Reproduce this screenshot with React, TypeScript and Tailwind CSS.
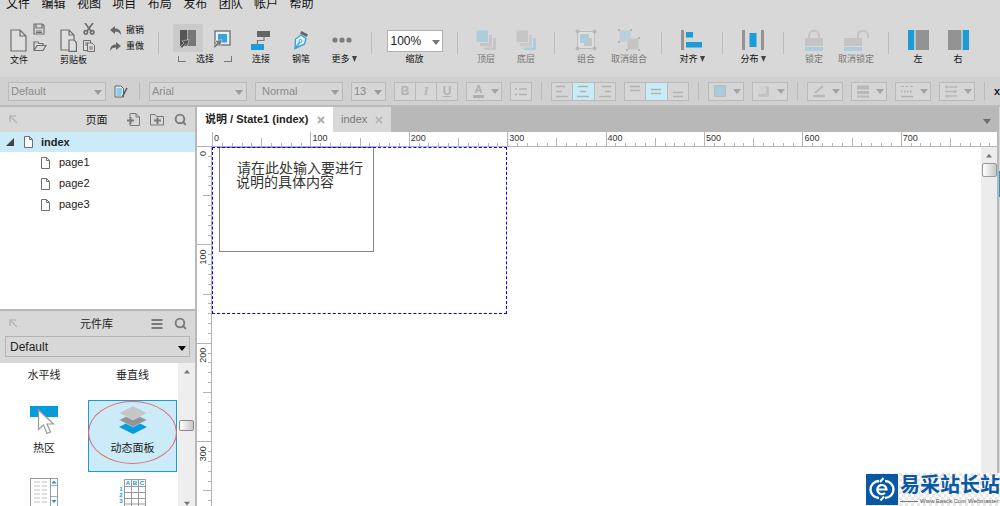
import type { ReactNode } from "react";
import { Menu, Search } from "lucide-react";

const menus = ["文件", "编辑", "视图", "项目", "布局", "发布", "团队", "帐户", "帮助"];
const pages = ["page1", "page2", "page3"];

// Ruler scale: pixels on screen per 10 units
const STEP = 9.84;

function Caret({ className = "" }: { className?: string }) {
  return (
    <svg viewBox="0 0 8 5" className={`h-[5px] w-2 ${className}`} aria-hidden="true">
      <path d="M0 0H8L4 5Z" fill="currentColor" />
    </svg>
  );
}

function PageIcon({ className = "" }: { className?: string }) {
  return (
    <svg viewBox="0 0 9 12" className={className} fill="#fff" stroke="#6f6f6f" aria-hidden="true">
      <path d="M.5 .5H5.500L8.500 3.500V11.500H.5Z M5.500 .5V3.500H8.500" />
    </svg>
  );
}

function Separator() {
  return <div className="mt-5 h-[22px] w-px flex-none bg-[#bcbcbc]" />;
}

interface ToolProps {
  label: string;
  className: string;
  children: ReactNode;
  dim?: boolean;
  more?: boolean;
}

function Tool({ label, className, children, dim, more }: ToolProps) {
  return (
    <button
      type="button"
      className={`flex flex-none flex-col items-center pt-[14px] ${dim ? "text-[#777]" : "text-[#111]"} ${className}`}
    >
      <span className="flex h-7 items-center justify-center">{children}</span>
      <span className="flex h-[10px] items-center gap-[2px] text-[9px] leading-[10px] whitespace-nowrap">
        {label}
        {more && (
          <svg viewBox="0 0 5 6" className="h-[6px] w-[5px]" aria-hidden="true">
            <path d="M0 0H5L2.500 6Z" fill="#444" />
          </svg>
        )}
      </span>
    </button>
  );
}

function Dropdown({ label, value, className }: { label: string; value: string; className: string }) {
  return (
    <div className={`relative h-[19px] flex-none border border-[#bababa] bg-[#d6d6d6] text-[#8c8c8c] ${className}`}>
      <select
        aria-label={label}
        className="block h-full w-full appearance-none bg-transparent pr-3 pl-[2px] text-[11px] leading-[17px] outline-none"
      >
        <option>{value}</option>
      </select>
      <Caret className="pointer-events-none absolute top-[7px] right-[3px] text-[#9c9c9c]" />
    </div>
  );
}

function FormatMenu({ label, children }: { label: string; children: ReactNode }) {
  return (
    <button
      type="button"
      aria-label={label}
      className="flex h-[19px] w-9 flex-none items-center justify-between border border-[#bababa] bg-[#d6d6d6] pr-[2px] pl-1"
    >
      {children}
      <Caret className="text-[#a4a4a4]" />
    </button>
  );
}

function FormatGroup({ className, children }: { className: string; children: ReactNode }) {
  return (
    <div className={`flex h-[19px] flex-none divide-x divide-[#bababa] border border-[#bababa] bg-[#d6d6d6] text-[#b4b4b4] ${className}`}>
      {children}
    </div>
  );
}

function LinesButton({ label, d, active }: { label: string; d: string; active?: boolean }) {
  return (
    <button
      type="button"
      aria-label={label}
      className={`flex flex-1 items-center justify-center ${active ? "bg-[#c9ebf8]" : ""}`}
    >
      <svg viewBox="0 0 14 13" className="h-[13px] w-[14px]" stroke="#b2b2b2" strokeWidth="1.4">
        <path d={d} />
      </svg>
    </button>
  );
}

function BarDivider() {
  return <div className="mx-px h-[18px] w-px flex-none bg-[#bababa]" />;
}

function Toolbar() {
  return (
    <div className="flex h-[65px] flex-none items-start gap-[14px] overflow-hidden pl-[10px]">
      {/* File and clipboard */}
      <div className="w-9 flex-none pt-4">
        <div className="flex gap-[6px]">
          <button type="button" aria-label="新建">
            <svg viewBox="0 0 17 23" className="h-[23px] w-[17px]" fill="#dedede" stroke="#6e6e6e" strokeWidth="1.2">
              <path d="M1 1H10L16 7V22H1Z M10 1V7H16" />
            </svg>
          </button>
          <div className="-mt-[5px] flex flex-col gap-[5px]">
            <button type="button" aria-label="保存">
              <svg viewBox="0 0 12 12" className="block h-3 w-3" fill="none" stroke="#6e6e6e" strokeWidth="1.2">
                <path d="M1 1H9.500L11 2.500V11H1Z M3 1V5H9V1 M3 8H9 M3 9.500H9" />
              </svg>
            </button>
            <button type="button" aria-label="打开">
              <svg viewBox="0 0 14 12" className="block h-3 w-[14px]" fill="none" stroke="#6e6e6e" strokeWidth="1.2">
                <path d="M1 10V2H5L6 3.500H10V5.500 M1 10.500L4 5.500H13L10 10.500Z" />
              </svg>
            </button>
          </div>
        </div>
        <div className="mt-[3px] text-[9px] leading-[10px] text-[#111]">文件</div>
      </div>
      <div className="w-9 flex-none pt-4">
        <div className="flex gap-[6px]">
          <button type="button" aria-label="粘贴">
            <svg viewBox="0 0 17 23" className="h-[23px] w-[17px]" fill="#dedede" stroke="#6e6e6e" strokeWidth="1.2">
              <path d="M1 1H9L14 6V21H1Z M9 1V6H14" />
              <path d="M9 11H14L16.400 13.500V22.400H9Z" />
            </svg>
          </button>
          <div className="-mt-[5px] flex flex-col gap-[5px]">
            <button type="button" aria-label="剪切">
              <svg viewBox="0 0 12 12" className="block h-3 w-3" fill="none" stroke="#6e6e6e" strokeWidth="1.7">
                <path d="M2 0L8 8 M10 0L4 8" />
                <circle cx="2.800" cy="9.300" r="1.700" />
                <circle cx="9.200" cy="9.300" r="1.700" />
              </svg>
            </button>
            <button type="button" aria-label="复制">
              <svg viewBox="0 0 12 12" className="block h-3 w-3" fill="#dedede" stroke="#6e6e6e">
                <path d="M.5 .5H7.500V10.500H.5Z M2 3H5 M2 5H5" />
                <path d="M4.500 3H9L11.500 5.500V11.500H4.500Z M6 7H10 M6 9H10" />
              </svg>
            </button>
          </div>
        </div>
        <div className="mt-[3px] text-[9px] leading-[10px] whitespace-nowrap text-[#111]">剪贴板</div>
      </div>
      <div className="flex w-[34px] flex-none flex-col gap-[6px] pt-[13px] text-[9px] leading-[10px] text-[#111]">
        <button type="button" className="flex items-center justify-between">
          <svg viewBox="0 0 11 9" className="h-[9px] w-[11px]" fill="#666">
            <path d="M0 4L5 0V2.500C9 2.500 11 5 11 9C9.500 6.500 8 5.500 5 5.500V8Z" />
          </svg>
          撤销
        </button>
        <button type="button" className="flex items-center justify-between">
          <svg viewBox="0 0 11 9" className="h-[9px] w-[11px]" fill="#666">
            <path d="M11 4L6 0V2.500C2 2.500 0 5 0 9C1.500 6.500 3 5.500 6 5.500V8Z" />
          </svg>
          重做
        </button>
      </div>
      <Separator />

      {/* Selection mode */}
      <div className="w-16 flex-none pt-3">
        <div className="flex gap-1">
          <button type="button" aria-label="相交选择" className="flex h-7 w-[30px] items-center justify-center bg-[#cacaca]">
            <svg viewBox="0 0 18 20" className="h-5 w-[18px]">
              <path d="M1 2H8V18H1Z" fill="#555" />
              <path d="M9 2H17V18H9Z" fill="#777" />
              <path d="M8.500 2V18" stroke="#aaa" />
              <path d="M1 19L5 15L3 13L10 11.500L8.500 18L6.500 16.500L3 20Z" fill="#555" stroke="#ccc" strokeWidth=".6" />
            </svg>
          </button>
          <button type="button" aria-label="包含选择" className="flex h-7 w-[30px] items-center justify-center">
            <svg viewBox="0 0 18 20" className="h-5 w-[18px]">
              <path d="M2 3H17V17H2Z" fill="#e6f2f8" stroke="#7c7c7c" strokeWidth="1.500" />
              <path d="M5 6H14V14.500H5Z" fill="#35a5dc" />
              <path d="M0 19L4 15L2 13L9 11.500L7.500 18L5.500 16.500L2 20Z" fill="#777" stroke="#ddd" strokeWidth=".6" />
            </svg>
          </button>
        </div>
        <div className="mt-[2px] flex items-center justify-between px-[5px] text-[9px] leading-[10px] text-[#111]">
          <span className="h-[6px] w-2 border-b border-l border-[#777]" />
          选择
          <span className="h-[6px] w-2 border-r border-b border-[#777]" />
        </div>
      </div>
      <div className="flex flex-none gap-5">
        <Tool label="连接" className="w-5">
          <svg viewBox="0 0 20 20" className="h-5 w-5">
            <path d="M6 1H19V7H6Z" fill="#666" />
            <path d="M0 14H13V20H0Z" fill="#1c9bd6" />
            <path d="M13 7V10.500H6.500V14" fill="none" stroke="#777" strokeWidth="1.200" />
          </svg>
        </Tool>
        <Tool label="钢笔" className="w-5">
          <svg viewBox="0 0 16 20" className="h-5 w-4">
            <path d="M2 18.500L2.500 9L8 5L13 8.500L11.500 14Z M2 18.500L7 12" fill="#e4f1f7" stroke="#3aa3d4" strokeWidth="1.400" />
            <circle cx="7.500" cy="11" r="1.500" fill="#fff" stroke="#3aa3d4" />
            <path d="M8.500 1L15 4.500L13.500 7L7 3.500Z" fill="#666" />
          </svg>
        </Tool>
        <Tool label="更多" className="w-[26px]" more>
          <svg viewBox="0 0 20 6" className="mr-1 h-[6px] w-5" fill="#7d7d7d">
            <circle cx="3" cy="3" r="2.600" />
            <circle cx="10" cy="3" r="2.600" />
            <circle cx="17" cy="3" r="2.600" />
          </svg>
        </Tool>
      </div>
      <Separator />

      {/* Zoom */}
      <div className="flex w-[57px] flex-none flex-col items-center pt-[18px]">
        <div className="relative h-[22px] w-[56px] border border-[#b0b0b0] bg-white">
          <select
            id="zoom"
            className="block h-full w-full appearance-none bg-white pl-[3px] text-[12px] leading-[20px] text-[#222] outline-none"
          >
            <option>100%</option>
          </select>
          <Caret className="pointer-events-none absolute top-[9px] right-[2px] text-[#777]" />
        </div>
        <label htmlFor="zoom" className="mt-[2px] text-[9px] leading-[10px] text-[#111]">
          缩放
        </label>
      </div>
      <Separator />

      {/* Stacking order */}
      <div className="flex flex-none gap-3">
        <Tool label="顶层" className="w-7" dim>
          <svg viewBox="0 0 20 20" className="h-5 w-5">
            <path d="M8 8H20V20H8Z" fill="#c6c6c6" />
            <path d="M3.500 4.500H16.500V17H3.500Z" fill="#c6c6c6" stroke="#d8d8d8" />
            <path d="M0 0H12.500V12.500H0Z" fill="#adcddb" stroke="#d8d8d8" />
          </svg>
        </Tool>
        <Tool label="底层" className="w-7" dim>
          <svg viewBox="0 0 20 20" className="h-5 w-5">
            <path d="M8 8H20V20H8Z" fill="#adcddb" />
            <path d="M3.500 4.500H16.500V17H3.500Z" fill="#cacaca" stroke="#d8d8d8" />
            <path d="M0 0H12.500V12.500H0Z" fill="#c6c6c6" stroke="#d8d8d8" />
          </svg>
        </Tool>
      </div>
      <Separator />

      <div className="flex flex-none gap-2">
        <Tool label="组合" className="w-[34px]" dim>
          <svg viewBox="0 0 22 22" className="h-[22px] w-[22px]">
            <path d="M2.500 2.500H19.500V19.500H2.500Z" fill="#dedede" stroke="#bcbcbc" />
            <path d="M9 9H17V17H9Z" fill="#c4c4c4" />
            <path d="M5 5H14V14H5Z" fill="#adcddb" />
            <g fill="#b8b8b8">
              <circle cx="2.500" cy="2.500" r="2" />
              <circle cx="19.500" cy="2.500" r="2" />
              <circle cx="2.500" cy="19.500" r="2" />
              <circle cx="19.500" cy="19.500" r="2" />
            </g>
          </svg>
        </Tool>
        <Tool label="取消组合" className="w-9" dim>
          <svg viewBox="0 0 22 22" className="h-[22px] w-[22px]">
            <path d="M9.500 9.500H20.500V20.500H9.500Z" fill="#c4c4c4" />
            <path d="M1.500 1.500H12.500V12.500H1.500Z" fill="#b9d0da" />
            <path
              d="M0 0H2V2H0Z M12 0H14V2H12Z M0 12H2V14H0Z M20 8H22V10H20Z M8 20H10V22H8Z M20 20H22V22H20Z"
              fill="#b4b4b4"
            />
          </svg>
        </Tool>
      </div>
      <Separator />

      <Tool label="对齐" className="w-8" more>
        <svg viewBox="0 0 22 22" className="h-[22px] w-[22px]">
          <path d="M0 1H3V21H0Z" fill="#939393" />
          <path d="M5 3H12V8.500H5Z M5 13H21V18.500H5Z" fill="#1c9bd6" />
        </svg>
      </Tool>
      <Separator />
      <Tool label="分布" className="w-8" more>
        <svg viewBox="0 0 22 22" className="h-[22px] w-[22px]">
          <path d="M0 1H3V21H0Z M19 1H22V21H19Z" fill="#939393" />
          <path d="M7.500 4H14.500V18H7.500Z" fill="#1c9bd6" />
        </svg>
      </Tool>
      <Separator />

      <div className="flex flex-none gap-2">
        <Tool label="锁定" className="w-8" dim>
          <svg viewBox="0 0 18 22" className="h-[22px] w-[18px]">
            <path d="M4 9V6.500C4 0 14 0 14 6.500V9" fill="none" stroke="#c4c4c4" strokeWidth="2" />
            <path d="M0 9H18V17H0Z" fill="#c4c4c4" />
            <path d="M0 18H18V22H0Z" fill="#adcddb" />
          </svg>
        </Tool>
        <Tool label="取消锁定" className="w-9" dim>
          <svg viewBox="0 0 25 22" className="h-[22px] w-[25px]">
            <path d="M14 9V6.500C14 0 24 0 24 6.500V9" fill="none" stroke="#c4c4c4" strokeWidth="2" />
            <path d="M0 9H18V17H0Z" fill="#c4c4c4" />
            <path d="M0 18H18V22H0Z" fill="#adcddb" />
          </svg>
        </Tool>
      </div>
      <Separator />

      <div className="flex flex-none gap-[10px]">
        <Tool label="左" className="w-[30px]">
          <svg viewBox="0 0 21 20" className="h-5 w-[21px]">
            <path d="M0 0H6V20H0Z" fill="#1c9bd6" />
            <path d="M6 0H8V20H6Z" fill="#b4c4cc" />
            <path d="M8 0H21V20H8Z" fill="#939393" />
          </svg>
        </Tool>
        <Tool label="右" className="w-[30px]">
          <svg viewBox="0 0 21 20" className="h-5 w-[21px]">
            <path d="M15 0H21V20H15Z" fill="#1c9bd6" />
            <path d="M13 0H15V20H13Z" fill="#b4c4cc" />
            <path d="M0 0H13V20H0Z" fill="#939393" />
          </svg>
        </Tool>
      </div>
    </div>
  );
}

function FormatBar() {
  return (
    <div className="flex h-[30px] flex-none items-center gap-2 overflow-hidden border-b-2 border-[#bcbcbc] bg-[#d0d0d0] pl-2">
      <Dropdown label="样式" value="Default" className="w-[98px]" />
      <button type="button" aria-label="样式管理" className="w-4 flex-none">
        <svg viewBox="0 0 14 13" className="h-[13px] w-[14px]">
          <path d="M1 1H7L9.500 3.500V12H1Z" fill="#d9f0fa" stroke="#666" />
          <path d="M2.500 4H8M2.500 6H8M2.500 8H8M2.500 10H7" stroke="#3fa9db" />
          <path d="M13 3L8.500 11.500" stroke="#555" strokeWidth="1.600" />
        </svg>
      </button>
      <BarDivider />
      <Dropdown label="字体" value="Arial" className="w-[98px]" />
      <Dropdown label="字形" value="Normal" className="w-[88px] pl-1" />
      <Dropdown label="字号" value="13" className="w-[35px]" />
      <FormatGroup className="w-16 text-[12px] leading-[17px]">
        <button type="button" className="flex-1 font-bold">B</button>
        <button type="button" className="flex-1 font-['Liberation_Serif',serif] font-bold italic">I</button>
        <button type="button" className="flex-1 font-bold underline">U</button>
      </FormatGroup>
      <FormatMenu label="文字颜色">
        <span className="ml-[2px] h-[14px] w-[11px] border-b-[3px] border-[#b0b0b0] text-center text-[11px] leading-[11px] font-bold text-[#b0b0b0]">
          A
        </span>
      </FormatMenu>
      <FormatGroup className="w-[22px]">
        <LinesButton label="项目符号" d="M1 4H3 M5 4H13 M1 9.500H3 M5 9.500H13" />
      </FormatGroup>
      <BarDivider />
      <FormatGroup className="w-[65px]">
        <LinesButton label="左对齐" d="M1 1.500H10 M1 6.500H7 M1 11.500H13" />
        <LinesButton label="居中" d="M2 1.500H12 M4 6.500H10 M1 11.500H13" active />
        <LinesButton label="右对齐" d="M4 1.500H13 M7 6.500H13 M1 11.500H13" />
      </FormatGroup>
      <FormatGroup className="w-[65px]">
        <LinesButton label="顶部对齐" d="M2 1.500H12 M2 5.500H12" />
        <LinesButton label="垂直居中" d="M2 4.500H12 M2 8.500H12" active />
        <LinesButton label="底部对齐" d="M2 7.500H12 M2 11.500H12" />
      </FormatGroup>
      <BarDivider />
      <FormatMenu label="填充颜色">
        <span className="ml-px h-3 w-3 border border-[#bbb] bg-[#a9cbda]" />
      </FormatMenu>
      <FormatMenu label="阴影">
        <span className="ml-px h-[11px] w-[11px] rounded-[2px] border-r-[3px] border-b-[3px] border-[#c2c2c2] bg-[#d2d2d2]" />
      </FormatMenu>
      <BarDivider />
      <FormatMenu label="线条颜色">
        <svg viewBox="0 0 14 13" className="h-[13px] w-[14px]" stroke="#b8b8b8">
          <path d="M3 8L11 1" strokeWidth="2" />
          <path d="M1 11H13" strokeWidth="2.500" />
        </svg>
      </FormatMenu>
      <FormatMenu label="线宽">
        <svg viewBox="0 0 14 13" className="h-[13px] w-[14px]" stroke="#b8b8b8">
          <path d="M1 2.500H13" strokeWidth="4" />
          <path d="M1 7.500H13" strokeWidth="3" />
          <path d="M1 11.500H13" strokeWidth="2" />
        </svg>
      </FormatMenu>
      <FormatMenu label="线型">
        <svg viewBox="0 0 14 13" className="h-[13px] w-[14px]" stroke="#b0b0b0">
          <path d="M1 1.500H13" strokeDasharray="3 1.500" />
          <path d="M1 6.500H13" strokeWidth="2" strokeDasharray="1.500 1.500" />
          <path d="M1 11.500H13" strokeWidth="1.500" />
        </svg>
      </FormatMenu>
      <FormatMenu label="箭头">
        <svg viewBox="0 0 14 13" className="h-[13px] w-[14px]" stroke="#b8b8b8" strokeWidth="1.300">
          <path d="M1 2H13 M1 6.500H13 M1 11H13 M3 .5V3.500 M11 5V8 M3 9.500V12.500" />
        </svg>
      </FormatMenu>
      <BarDivider />
      <span className="flex-none text-[11px] font-bold text-[#222]">x:</span>
    </div>
  );
}

function PanelHeader({ title, children }: { title: string; children: ReactNode }) {
  return (
    <div className="flex h-[25px] flex-none items-center bg-[#d8d8d8] pr-2 pl-[9px]">
      <svg viewBox="0 0 9 9" className="h-[9px] w-[9px]" fill="none" stroke="#b8b8b8" strokeWidth="1.600">
        <path d="M1 7V1H7 M1 1L8 8" />
      </svg>
      <h2 className="flex-1 pl-12 text-center text-[11px] leading-4 text-[#222]">{title}</h2>
      {children}
    </div>
  );
}

function PagesPanel() {
  return (
    <section className="h-[204px] flex-none border-b-2 border-[#b8b8b8] bg-white">
      <PanelHeader title="页面">
        <div className="flex w-[60px] items-center justify-between text-[#7a7a7a]">
          <button type="button" aria-label="添加页面">
            <svg viewBox="0 0 13 13" className="block h-[13px] w-[13px]" fill="none" stroke="currentColor">
              <path d="M3 4V.5H9L12.500 4V12.500H3V10 M9 .5V4H12.500" />
              <path d="M0 7.500H7 M3.500 4V11" strokeWidth="2" />
            </svg>
          </button>
          <button type="button" aria-label="添加文件夹">
            <svg viewBox="0 0 14 13" className="block h-[13px] w-[14px]" fill="none" stroke="currentColor">
              <path d="M.5 1.500H5L6.500 3.500H13.500V12H.5Z" />
              <path d="M4 7.500H11 M7.500 4.500V11" strokeWidth="2" />
            </svg>
          </button>
          <button type="button" aria-label="搜索页面">
            <Search size={13} strokeWidth={3.5} className="block" />
          </button>
        </div>
      </PanelHeader>
      <div className="flex h-5 items-center bg-[#cbebf8] pl-[6px]">
        <svg viewBox="0 0 8 8" className="h-2 w-2">
          <path d="M8 0V8H0Z" fill="#444" />
        </svg>
        <PageIcon className="ml-[10px] h-3 w-[9px]" />
        <span className="ml-2 text-[11px] font-bold text-[#222]">index</span>
      </div>
      <ul>
        {pages.map((page) => (
          <li key={page} className="flex h-[21px] items-center gap-[9px] pl-[41px] text-[11px] text-[#222]">
            <PageIcon className="h-3 w-[9px]" />
            {page}
          </li>
        ))}
      </ul>
    </section>
  );
}

function LibraryPanel() {
  return (
    <section className="flex min-h-0 flex-1 flex-col bg-[#d8d8d8]">
      <PanelHeader title="元件库">
        <div className="flex w-[60px] items-center justify-between pl-[23px] text-[#7a7a7a]">
          <button type="button" aria-label="元件库菜单">
            <Menu size={14} strokeWidth={3.5} className="block" />
          </button>
          <button type="button" aria-label="搜索元件">
            <Search size={13} strokeWidth={3.5} className="block" />
          </button>
        </div>
      </PanelHeader>
      <div className="relative mx-[5px] mb-[6px] h-[21px] flex-none border border-[#b4b4b4]">
        <select
          aria-label="选择元件库"
          className="block h-full w-full appearance-none bg-transparent pt-px pl-1 text-[12px] leading-[18px] text-[#222] outline-none"
        >
          <option>Default</option>
        </select>
        <Caret className="pointer-events-none absolute top-[9px] right-[3px] text-black" />
      </div>
      <div className="flex min-h-0 flex-1 overflow-hidden bg-white">
        <div className="grid flex-1 grid-cols-[88px_89px] grid-rows-[37px_72px_auto] text-center text-[11px] leading-4 text-[#222]">
          <div className="pt-1">水平线</div>
          <div className="pt-1">垂直线</div>
          <button type="button" className="flex flex-col items-center pt-[6px]">
            <svg viewBox="0 0 28 30" className="h-[30px] w-7">
              <path d="M0 0H28V11H0Z" fill="#069cdb" />
              <path d="M8.500 4V23.500L13.500 19L17 27.500L20.500 26L17 18H23.500Z" fill="#fff" stroke="#999" strokeWidth="1.200" />
            </svg>
            <span className="mt-1">热区</span>
          </button>
          <button type="button" className="relative flex flex-col items-center border border-[#1c9bd0] bg-[#cbebf8] pt-[5px]">
            <svg viewBox="0 0 28 30" className="h-[30px] w-7">
              <path d="M14 14L28 21L14 28L0 21Z" fill="#069cdb" />
              <path d="M14 7L28 14L14 21L0 14Z" fill="#949494" stroke="#cbebf8" strokeWidth=".5" />
              <path d="M14 0L28 7L14 14L0 7Z" fill="#c6c6c6" stroke="#cbebf8" strokeWidth=".5" />
            </svg>
            <span className="mt-1">动态面板</span>
            {/* Hand-drawn mark around the widget */}
            <span className="absolute -inset-x-px top-0 h-[63px] rounded-[50%] border border-[#e06a6e]" />
          </button>
          <button type="button" aria-label="内联框架" className="flex justify-center pt-[6px]">
            <svg viewBox="0 0 28 30" className="h-[30px] w-7">
              <path d="M.5 .5H27.500V30H.5Z M20.500 .5V30" fill="#fff" stroke="#999" />
              <path d="M4 4H10M12 4H17M4 8H10M12 8H17M4 12H10M12 12H17M4 16H10M12 16H17M4 20H10M12 20H17M4 24H10M12 24H17" stroke="#c0c0c0" />
              <path d="M21 7.500H27M21 18.500H27" stroke="#aaa" />
              <path d="M24 2.500L26.500 5.500H21.500Z M24 25L26.500 22H21.500Z" fill="#069cdb" />
            </svg>
          </button>
          <button type="button" aria-label="中继器" className="flex justify-center pt-[6px]">
            <svg viewBox="0 0 28 30" className="h-[30px] w-7">
              <path d="M5.500 1.500H26.500V28 M5.500 1.500V28 M12.500 1.500V28 M19.500 1.500V28 M5.500 8.500H26.500 M5.500 14.500H26.500 M5.500 20.500H26.500 M5.500 26H26.500" fill="none" stroke="#999" />
              <g fill="#069cdb" fontSize="6" fontWeight="bold" textAnchor="middle">
                <text x="9" y="7">A</text>
                <text x="16" y="7">B</text>
                <text x="23" y="7">C</text>
                <text x="2" y="13">1</text>
                <text x="2" y="19">2</text>
                <text x="2" y="25">3</text>
              </g>
            </svg>
          </button>
        </div>
        <div className="flex w-[17px] flex-none flex-col items-center bg-[#eee] pt-[6px]">
          <Caret className="w-[6px] rotate-180 text-[#777]" />
          <div className="mt-[46px] h-[11px] w-[15px] rounded-[2px] border border-[#888] bg-gradient-to-r from-white to-[#c8c8c8]" />
          <Caret className="mt-auto w-[6px] text-[#777]" />
        </div>
      </div>
    </section>
  );
}

const ticks = Array.from({ length: 80 }, (_, i) => i);

function tickStart(i: number) {
  if (i % 10 === 0) return 0;
  return i % 5 === 0 ? 6 : 11;
}

function HorizontalRuler() {
  return (
    <svg className="block h-[15px] min-w-0 flex-1 bg-white" stroke="#b4b4b4">
      <path d="M0 14.500H2000" />
      {ticks.map((i) => (
        <path key={i} d={`M${Math.round(i * STEP) + 0.5} ${tickStart(i)}V15`} />
      ))}
      <g fill="#333" stroke="none" fontSize="9">
        {ticks.filter((i) => i % 10 === 0).map((i) => (
          <text key={i} x={i * STEP + 2} y="9">{i * 10}</text>
        ))}
      </g>
    </svg>
  );
}

function VerticalRuler() {
  return (
    <svg className="block h-full w-[15px] flex-none bg-white" stroke="#b4b4b4">
      <path d="M14.500 0V2000" />
      {ticks.map((i) => (
        <path key={i} d={`M${tickStart(i)} ${Math.round(i * STEP) - 0.5}H15`} />
      ))}
      <g fill="#333" stroke="none" fontSize="9" textAnchor="end">
        {ticks.filter((i) => i % 10 === 0).map((i) => (
          <text key={i} transform={`translate(9 ${i * STEP + 4}) rotate(-90)`}>{i * 10}</text>
        ))}
      </g>
    </svg>
  );
}

function Editor() {
  return (
    <main className="flex min-w-0 flex-1 flex-col">
      <div className="flex h-[25px] flex-none items-stretch bg-[#b8b8b8] text-[11px]">
        <div className="flex w-[136px] items-center justify-between bg-white pr-2 pl-2 font-bold whitespace-nowrap text-[#222]">
          说明 / State1 (index)
          <button type="button" aria-label="关闭" className="text-[#b0b0b0]">
            <svg viewBox="0 0 8 8" className="h-2 w-2" stroke="currentColor" strokeWidth="2">
              <path d="M1 1L7 7M7 1L1 7" />
            </svg>
          </button>
        </div>
        <div className="flex w-[58px] items-center justify-between bg-[#d8d8d8] pr-2 pl-2 text-[#777]">
          index
          <button type="button" aria-label="关闭" className="text-[#b8b8b8]">
            <svg viewBox="0 0 8 8" className="h-2 w-2" stroke="currentColor" strokeWidth="2">
              <path d="M1 1L7 7M7 1L1 7" />
            </svg>
          </button>
        </div>
        <button type="button" aria-label="标签列表" className="ml-auto px-[6px] pt-1">
          <Caret className="text-[#6c6c6c]" />
        </button>
      </div>
      <div className="flex flex-none bg-white">
        <div className="w-[15px] flex-none border-b border-[#b4b4b4]" />
        <HorizontalRuler />
      </div>
      <div className="flex min-h-0 flex-1">
        <VerticalRuler />
        <div className="relative min-w-0 flex-1 overflow-hidden bg-white">
          {/* Widget placed on the canvas */}
          <div className="absolute top-0 left-[7px] h-[105px] w-[155px] border border-[#858585] pt-[13px] pl-4">
            <p className="pl-px text-[14px] leading-[14px] whitespace-nowrap text-[#333]">请在此处输入要进行</p>
            <p className="text-[14px] leading-[14px] whitespace-nowrap text-[#333]">说明的具体内容</p>
          </div>
          {/* Dynamic panel bounds */}
          <div className="absolute top-0 left-0 h-[167px] w-[295px] border border-dashed border-[#0000ff]" />
        </div>
        <div className="flex w-4 flex-none flex-col items-center bg-[#ececec] pt-[6px]">
          <Caret className="w-[6px] rotate-180 text-[#777]" />
          <div className="mt-[5px] h-[14px] w-[15px] rounded-[2px] border border-[#999] bg-gradient-to-r from-white to-[#c8c8c8]" />
        </div>
      </div>
    </main>
  );
}

function Watermark() {
  return (
    <div className="absolute right-0 bottom-0 flex h-[33px] w-[134px] items-start bg-white bg-[repeating-conic-gradient(#e8e8e8_0_25%,#fff_0_50%)] bg-[length:6px_6px]">
      <svg viewBox="0 0 32 32" className="h-8 w-8 flex-none">
        <path d="M0 1H32V32H0Z" fill="#0758a5" />
        <g fill="none" stroke="#fff">
          <path d="M13 8A8.500 8.500 0 0 0 13 25 M19 8A8.500 8.500 0 0 1 19 25" strokeWidth="2.400" />
          <path d="M11.500 16.500H20.500A4.600 4.600 0 1 0 19 20" strokeWidth="2.200" />
          <path d="M17.500 5L14 9 M18 23.500L14.500 27.500" strokeWidth="2" />
        </g>
      </svg>
      <div className="flex flex-col pl-[2px] whitespace-nowrap">
        <span className="text-[20px] leading-[25px] font-bold text-[#0758a5]">易采站长站</span>
        <span className="flex items-center gap-[2px] text-[6px] leading-[6px] text-[#555]">
          <span className="h-px w-[18px] bg-[#777]" />
          Www.Easck.Com Webmaster
        </span>
      </div>
    </div>
  );
}

export default function App() {
  return (
    <div className="relative flex h-screen flex-col overflow-hidden bg-[#d8d8d8] font-['Liberation_Sans','Noto_Sans_CJK_SC',sans-serif]">
      <nav className="grid h-3 w-[325px] flex-none grid-cols-9 overflow-hidden pl-[6px]">
        {menus.map((menu) => (
          <button key={menu} type="button" className="-mt-1 h-4 text-left text-[12px] leading-4 whitespace-nowrap text-[#111]">
            {menu}
          </button>
        ))}
      </nav>
      <Toolbar />
      <FormatBar />
      <div className="flex min-h-0 flex-1">
        <aside className="flex w-[197px] flex-none flex-col border-r-2 border-[#b8b8b8]">
          <PagesPanel />
          <LibraryPanel />
        </aside>
        <Editor />
        {/* Edge of the collapsed inspector */}
        <div className="w-[3px] flex-none border-l-2 border-[#b8b8b8] bg-[#d8d8d8] pt-16">
          <div className="h-[26px] bg-[#1c9bd6]" />
        </div>
      </div>
      <Watermark />
    </div>
  );
}
